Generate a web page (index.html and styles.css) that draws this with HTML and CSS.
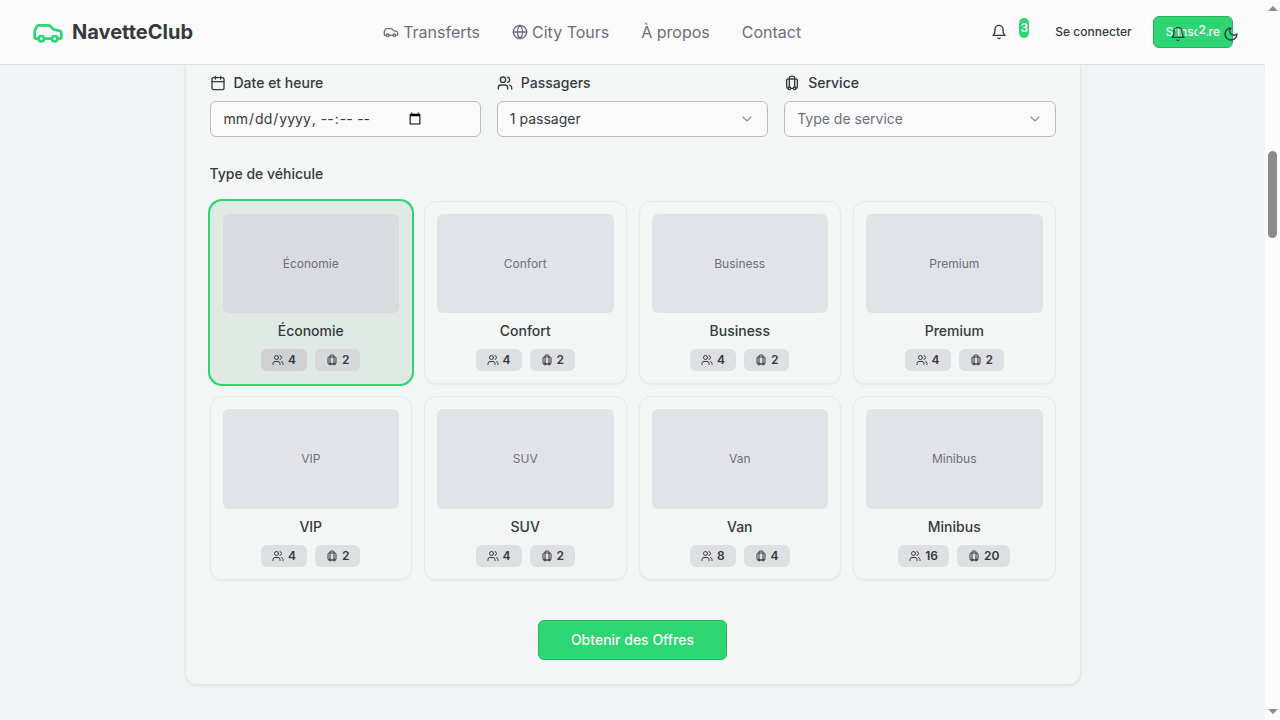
FILE: index.html
```html
<!DOCTYPE html>
<html lang="fr">
<head>
<meta charset="utf-8">
<meta name="viewport" content="width=device-width, initial-scale=1">
<title>NavetteClub</title>
<link rel="stylesheet" href="styles.css">
</head>
<body>
<svg class="sprite" aria-hidden="true">
  <symbol id="car" viewBox="0 0 24 24"><path d="M19 17h2c.6 0 1-.4 1-1v-3c0-.9-.7-1.7-1.5-1.9C18.7 10.6 16 10 16 10s-1.3-1.4-2.2-2.3c-.5-.4-1.1-.7-1.8-.7H5c-.6 0-1.1.4-1.4.9l-1.4 2.9A3.7 3.7 0 0 0 2 12v4c0 .6.4 1 1 1h2M9 17h6"/><circle cx="7" cy="17" r="2"/><circle cx="17" cy="17" r="2"/></symbol>
  <symbol id="globe" viewBox="0 0 24 24"><circle cx="12" cy="12" r="10"/><path d="M12 2a14.5 14.5 0 0 0 0 20 14.5 14.5 0 0 0 0-20M2 12h20"/></symbol>
  <symbol id="bell" viewBox="0 0 24 24"><path d="M6 8a6 6 0 0 1 12 0c0 7 3 9 3 9H3s3-2 3-9M10.3 21a1.94 1.94 0 0 0 3.4 0"/></symbol>
  <symbol id="moon" viewBox="0 0 24 24"><path d="M12 3a6 6 0 0 0 9 9 9 9 0 1 1-9-9Z"/></symbol>
  <symbol id="calendar" viewBox="0 0 24 24"><path d="M8 2v4M16 2v4M3 10h18"/><rect x="3" y="4" width="18" height="18" rx="2"/></symbol>
  <symbol id="users" viewBox="0 0 24 24"><path d="M16 21v-2a4 4 0 0 0-4-4H6a4 4 0 0 0-4 4v2M22 21v-2a4 4 0 0 0-3-3.87M16 3.13a4 4 0 0 1 0 7.75"/><circle cx="9" cy="7" r="4"/></symbol>
  <symbol id="luggage" viewBox="0 0 24 24"><path d="M6 20a2 2 0 0 1-2-2V8a2 2 0 0 1 2-2h12a2 2 0 0 1 2 2v10a2 2 0 0 1-2 2M8 18V4a2 2 0 0 1 2-2h4a2 2 0 0 1 2 2v14M10 20h4"/><circle cx="16" cy="20" r="2"/><circle cx="8" cy="20" r="2"/></symbol>
  <symbol id="chevron" viewBox="0 0 24 24"><path d="m6 9 6 6 6-6"/></symbol>
</svg>
<div class="window">
  <div class="page">
    <header class="header">
      <a class="brand" href="#"><svg class="icon icon-lg"><use href="#car"/></svg>NavetteClub</a>
      <nav class="nav">
        <a href="#"><svg class="icon"><use href="#car"/></svg>Transferts</a>
        <a href="#"><svg class="icon"><use href="#globe"/></svg>City Tours</a>
        <a href="#">À propos</a>
        <a href="#">Contact</a>
      </nav>
      <div class="actions">
        <button class="notify" type="button" aria-label="Notifications"><svg class="icon"><use href="#bell"/></svg><span class="count">3</span></button>
        <a class="login" href="#">Se connecter</a>
        <a class="signup" href="#">S'inscrire</a>
      </div>
      <div class="floating">
        <button type="button" class="float-bell" aria-label="Alertes"><svg class="icon"><use href="#bell"/></svg><span class="float-count">2</span></button>
        <button type="button" aria-label="Thème"><svg class="icon"><use href="#moon"/></svg></button>
      </div>
    </header>
    <main class="main">
      <form class="card">
        <div class="fields">
          <div class="field">
            <label for="date"><svg class="icon"><use href="#calendar"/></svg>Date et heure</label>
            <input class="control" id="date" type="datetime-local">
          </div>
          <div class="field">
            <label for="passengers"><svg class="icon"><use href="#users"/></svg>Passagers</label>
            <div class="select"><select class="control" id="passengers"><option>1 passager</option></select><svg class="icon"><use href="#chevron"/></svg></div>
          </div>
          <div class="field">
            <label for="service"><svg class="icon"><use href="#luggage"/></svg>Service</label>
            <div class="select"><select class="control placeholder" id="service"><option>Type de service</option></select><svg class="icon"><use href="#chevron"/></svg></div>
          </div>
        </div>
        <fieldset class="types">
          <legend>Type de véhicule</legend>
          <div class="grid">
            <label class="vehicle"><input type="radio" name="type" checked><span class="photo">Économie</span><span class="name">Économie</span><span class="badges"><span class="badge"><svg class="icon icon-sm"><use href="#users"/></svg>4</span><span class="badge"><svg class="icon icon-sm"><use href="#luggage"/></svg>2</span></span></label>
            <label class="vehicle"><input type="radio" name="type"><span class="photo">Confort</span><span class="name">Confort</span><span class="badges"><span class="badge"><svg class="icon icon-sm"><use href="#users"/></svg>4</span><span class="badge"><svg class="icon icon-sm"><use href="#luggage"/></svg>2</span></span></label>
            <label class="vehicle"><input type="radio" name="type"><span class="photo">Business</span><span class="name">Business</span><span class="badges"><span class="badge"><svg class="icon icon-sm"><use href="#users"/></svg>4</span><span class="badge"><svg class="icon icon-sm"><use href="#luggage"/></svg>2</span></span></label>
            <label class="vehicle"><input type="radio" name="type"><span class="photo">Premium</span><span class="name">Premium</span><span class="badges"><span class="badge"><svg class="icon icon-sm"><use href="#users"/></svg>4</span><span class="badge"><svg class="icon icon-sm"><use href="#luggage"/></svg>2</span></span></label>
            <label class="vehicle"><input type="radio" name="type"><span class="photo">VIP</span><span class="name">VIP</span><span class="badges"><span class="badge"><svg class="icon icon-sm"><use href="#users"/></svg>4</span><span class="badge"><svg class="icon icon-sm"><use href="#luggage"/></svg>2</span></span></label>
            <label class="vehicle"><input type="radio" name="type"><span class="photo">SUV</span><span class="name">SUV</span><span class="badges"><span class="badge"><svg class="icon icon-sm"><use href="#users"/></svg>4</span><span class="badge"><svg class="icon icon-sm"><use href="#luggage"/></svg>2</span></span></label>
            <label class="vehicle"><input type="radio" name="type"><span class="photo">Van</span><span class="name">Van</span><span class="badges"><span class="badge"><svg class="icon icon-sm"><use href="#users"/></svg>8</span><span class="badge"><svg class="icon icon-sm"><use href="#luggage"/></svg>4</span></span></label>
            <label class="vehicle"><input type="radio" name="type"><span class="photo">Minibus</span><span class="name">Minibus</span><span class="badges"><span class="badge"><svg class="icon icon-sm"><use href="#users"/></svg>16</span><span class="badge"><svg class="icon icon-sm"><use href="#luggage"/></svg>20</span></span></label>
          </div>
        </fieldset>
        <button class="submit" type="submit">Obtenir des Offres</button>
      </form>
    </main>
  </div>
  <div class="scrollbar" aria-hidden="true">
    <span class="arrow arrow-up"></span>
    <span class="thumb"></span>
    <span class="arrow arrow-down"></span>
  </div>
</div>
</body>
</html>
```

FILE: styles.css
```css
*, *::before, *::after { box-sizing: border-box; }

body {
  margin: 0;
  background: #f1f3f5;
  color: #363940;
  font-family: Inter, "Liberation Sans", sans-serif;
  font-size: 14px;
  line-height: 20px;
}

a { color: inherit; text-decoration: none; }
button, input, select { font: inherit; color: inherit; }

.sprite { position: absolute; width: 0; height: 0; }

.icon {
  width: 16px;
  height: 16px;
  flex: none;
  fill: none;
  stroke: currentColor;
  stroke-width: 2;
  stroke-linecap: round;
  stroke-linejoin: round;
}
.icon-lg { width: 32px; height: 32px; color: #2ed573; }
.icon-sm { width: 12px; height: 12px; }

.window { display: flex; min-height: 100vh; }
.page { flex: 1; min-width: 0; }

/* Header */
.header {
  position: relative;
  display: flex;
  align-items: center;
  justify-content: space-between;
  padding: 16px 32px;
  background: #fafafa;
  border-bottom: 1px solid #dfe1e6;
}
.brand {
  display: flex;
  align-items: center;
  gap: 8px;
  font-size: 20px;
  line-height: 28px;
  font-weight: 700;
}
.nav {
  display: flex;
  gap: 32px;
  color: #6b7080;
  font-size: 16px;
  line-height: 24px;
}
.nav a { display: flex; align-items: center; gap: 4px; }
.actions {
  display: flex;
  align-items: center;
  font-size: 12px;
  line-height: 16px;
  font-weight: 500;
}
.notify {
  display: flex;
  gap: 12px;
  padding: 0;
  border: 0;
  background: none;
}
.count {
  min-width: 10px;
  margin: -6px 0 2px;
  padding: 2px 1px;
  border-radius: 5px;
  background: #2ed573;
  color: #fafafa;
  font-weight: 600;
}
.login { padding: 8px 21px 8px 26px; }
.signup {
  padding: 7px 12px;
  border: 1px solid #26b561;
  border-radius: 6px;
  background: #2ed573;
  color: #fafafa;
}
.floating {
  position: absolute;
  top: 24px;
  right: 26px;
  display: flex;
  gap: 15px;
}
.floating button {
  display: flex;
  padding: 2px 0 0;
  border: 0;
  background: none;
}
.float-bell { gap: 11px; font-size: 12px; line-height: 12px; }
.float-count {
  height: 12px;
  margin-top: -2px;
  padding: 0 2px;
  border-radius: 4px;
  background: #2ed573;
  color: #fafafa;
  font-weight: 600;
}

/* Booking form */
.main { padding: 0 32px 35px; }
.card {
  display: flex;
  flex-direction: column;
  gap: 24px;
  max-width: 896px;
  margin: 0 auto;
  padding: 8px 24px 24px;
  border: 1px solid #e3e5e9;
  border-top: 0;
  border-radius: 0 0 12px 12px;
  background: #f4f6f5;
  box-shadow: 0 1px 3px rgb(0 0 0 / 6%);
}
.fields {
  display: grid;
  grid-template-columns: repeat(3, minmax(0, 1fr));
  gap: 16px;
}
.field { display: grid; gap: 8px; font-weight: 500; }
.field label { display: flex; align-items: center; gap: 8px; }
.control {
  display: flex;
  width: 100%;
  height: 36px;
  padding: 4px 12px;
  border: 1px solid #b8bac4;
  border-radius: 6px;
  background: #fafafa;
  font-weight: 400;
}
.select { position: relative; }
.select .control { appearance: none; }
.select .placeholder { color: #6b7080; }
.select .icon {
  position: absolute;
  top: 10px;
  right: 13px;
  opacity: .5;
  pointer-events: none;
}

.types { min-width: 0; margin: 0; padding: 0; border: 0; }
.types legend { padding: 3px 0 17px; font-weight: 500; }
.grid {
  display: grid;
  grid-template-columns: repeat(4, minmax(0, 1fr));
  gap: 12px;
}
.vehicle {
  position: relative;
  display: flex;
  flex-direction: column;
  padding: 12px;
  border: 1px solid #e6e8eb;
  border-radius: 12px;
  box-shadow: 0 1px 2px rgb(0 0 0 / 6%);
  text-align: center;
}
.vehicle input { position: absolute; opacity: 0; }
.vehicle:has(:checked) {
  border-color: #e0eae4;
  background: #e0eae4;
  box-shadow: 0 0 0 2px #2ed573;
}
.photo {
  display: flex;
  align-items: center;
  justify-content: center;
  aspect-ratio: 16 / 9;
  border-radius: 6px;
  background: #e2e3e9;
  color: #6b7080;
  font-size: 12px;
}
.name { margin: 8px 0; font-weight: 500; }
.badges { display: flex; justify-content: center; gap: 8px; }
.badge {
  display: flex;
  align-items: center;
  gap: 4px;
  padding: 3px 11px;
  border-radius: 6px;
  background: #dedfe3;
  font-size: 12px;
  line-height: 16px;
  font-weight: 600;
}
.vehicle:has(:checked) .photo { background: #dadbe0; }
.vehicle:has(:checked) .badge { background: #d7d8da; }
.vehicle:has(:checked) .badge:first-child { background: #cfd0d2; }

.submit {
  align-self: center;
  margin-top: 16px;
  padding: 9px 32px;
  border: 1px solid #26b561;
  border-radius: 6px;
  background: #2ed573;
  color: #fafafa;
  font-weight: 500;
}

/* Window scrollbar */
.scrollbar {
  display: flex;
  flex-direction: column;
  align-items: center;
  width: 15px;
  padding: 6px 0;
  background: #fcfcfc;
}
.arrow { border: 5px solid transparent; }
.arrow-up { border-top: 0; border-bottom-color: #8b8b8b; }
.arrow-down { margin-top: auto; border-bottom: 0; border-top-color: #8b8b8b; }
.thumb {
  width: 9px;
  height: 87px;
  margin-top: 140px;
  border-radius: 5px;
  background: #8b8b8b;
}
```
